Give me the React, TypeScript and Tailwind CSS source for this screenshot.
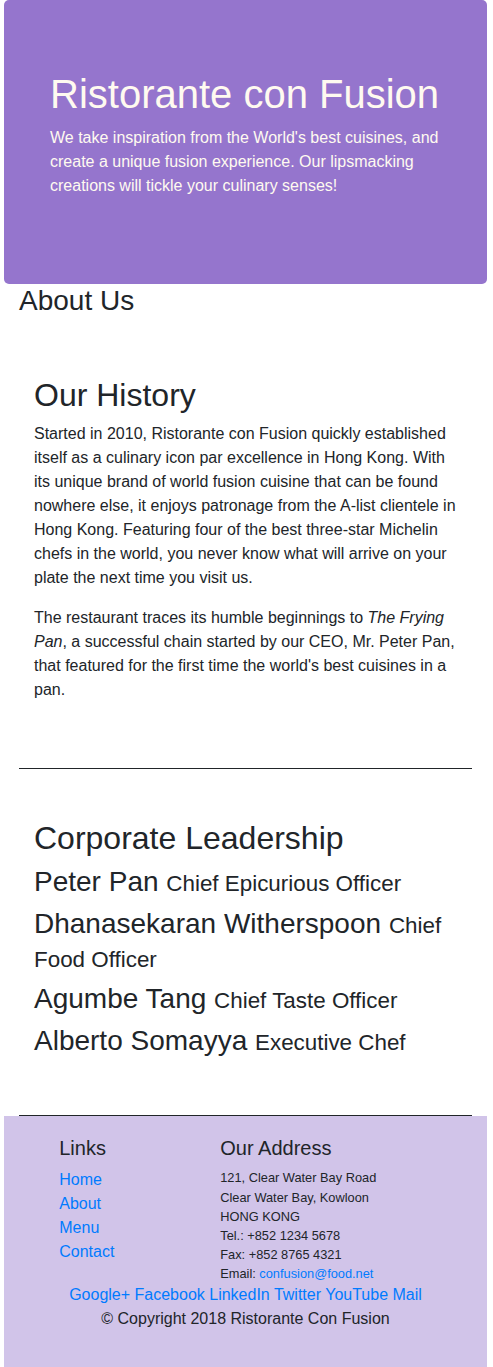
import React from "react";

const leaders = [
  { name: "Peter Pan", title: "Chief Epicurious Officer" },
  { name: "Dhanasekaran Witherspoon", title: "Chief Food Officer" },
  { name: "Agumbe Tang", title: "Chief Taste Officer" },
  { name: "Alberto Somayya", title: "Executive Chef" },
];

export default function App() {
  return (
    <div className="ml-[4px] mr-[6px] font-['Liberation_Sans',Arial,sans-serif] text-[16px] leading-[1.5] text-[#212529]">
      {/* Jumbotron */}
      <header className="rounded-[5px] bg-[#9575cd] px-[46px] pt-[70px] pb-[70px] text-[#fffaf0]">
        <h1 className="mb-[8px] text-[40px] leading-[1.2] font-normal">Ristorante con Fusion</h1>
        <p className="mb-[16px]">
          We take inspiration from the World's best cuisines, and create a unique fusion experience. Our
          lipsmacking creations will tickle your culinary senses!
        </p>
      </header>

      <div className="px-[15px]">
        {/* Row header */}
        <div>
          <h3 className="mb-[8px] text-[28px] leading-[1.2] font-normal">About Us</h3>
        </div>

        {/* Our History */}
        <div className="border-b border-[#212529] px-[15px] pt-[50px] pb-[50px]">
          <h2 className="mb-[8px] text-[32px] leading-[1.2] font-normal">Our History</h2>
          <p className="mb-[16px]">
            Started in 2010, Ristorante con Fusion quickly established itself as a culinary icon par
            excellence in Hong Kong. With its unique brand of world fusion cuisine that can be found nowhere
            else, it enjoys patronage from the A-list clientele in Hong Kong. Featuring four of the best
            three-star Michelin chefs in the world, you never know what will arrive on your plate the next
            time you visit us.
          </p>
          <p className="mb-[16px]">
            The restaurant traces its humble beginnings to <em>The Frying Pan</em>, a successful chain started
            by our CEO, Mr. Peter Pan, that featured for the first time the world's best cuisines in a pan.
          </p>
        </div>

        {/* Corporate Leadership */}
        <div className="border-b border-[#212529] px-[15px] pt-[50px] pb-[50px]">
          <h2 className="mb-[8px] text-[32px] leading-[1.2] font-normal">Corporate Leadership</h2>
          {leaders.map((l) => (
            <h3 key={l.name} className="mb-[8px] text-[28px] leading-[1.2] font-normal">
              {l.name} <small className="text-[22.4px] leading-[1.2] font-normal">{l.title}</small>
            </h3>
          ))}
        </div>
      </div>

      {/* Footer */}
      <footer className="bg-[#d1c4e9] pt-[20px] pb-[20px]">
        <div className="flex">
          <div className="ml-[40.25px] w-[161px] px-[15px]">
            <h5 className="mb-[8px] text-[20px] leading-[1.2] font-normal">Links</h5>
            <ul className="flex flex-col">
              <li><a href="#" className="text-[#007bff]">Home</a></li>
              <li><a href="#" className="text-[#007bff]">About</a></li>
              <li><a href="#" className="text-[#007bff]">Menu</a></li>
              <li><a href="#" className="text-[#007bff]">Contact</a></li>
            </ul>
          </div>
          <div className="w-[281.75px] px-[15px]">
            <h5 className="mb-[8px] text-[20px] leading-[1.2] font-normal">Our Address</h5>
            <address className="text-[12.8px] leading-[1.5] not-italic">
              121, Clear Water Bay Road<br />
              Clear Water Bay, Kowloon<br />
              HONG KONG<br />
              Tel.: +852 1234 5678<br />
              Fax: +852 8765 4321<br />
              Email: <a href="#" className="text-[#007bff]">confusion@food.net</a>
            </address>
          </div>
        </div>
        <div className="px-[15px] text-center">
          <a href="#" className="text-[#007bff]">Google+</a>{" "}
          <a href="#" className="text-[#007bff]">Facebook</a>{" "}
          <a href="#" className="text-[#007bff]">LinkedIn</a>{" "}
          <a href="#" className="text-[#007bff]">Twitter</a>{" "}
          <a href="#" className="text-[#007bff]">YouTube</a>{" "}
          <a href="#" className="text-[#007bff]">Mail</a>
        </div>
        <div className="flex justify-center">
          <p className="mb-[16px] px-[15px]">© Copyright 2018 Ristorante Con Fusion</p>
        </div>
      </footer>
    </div>
  );
}
